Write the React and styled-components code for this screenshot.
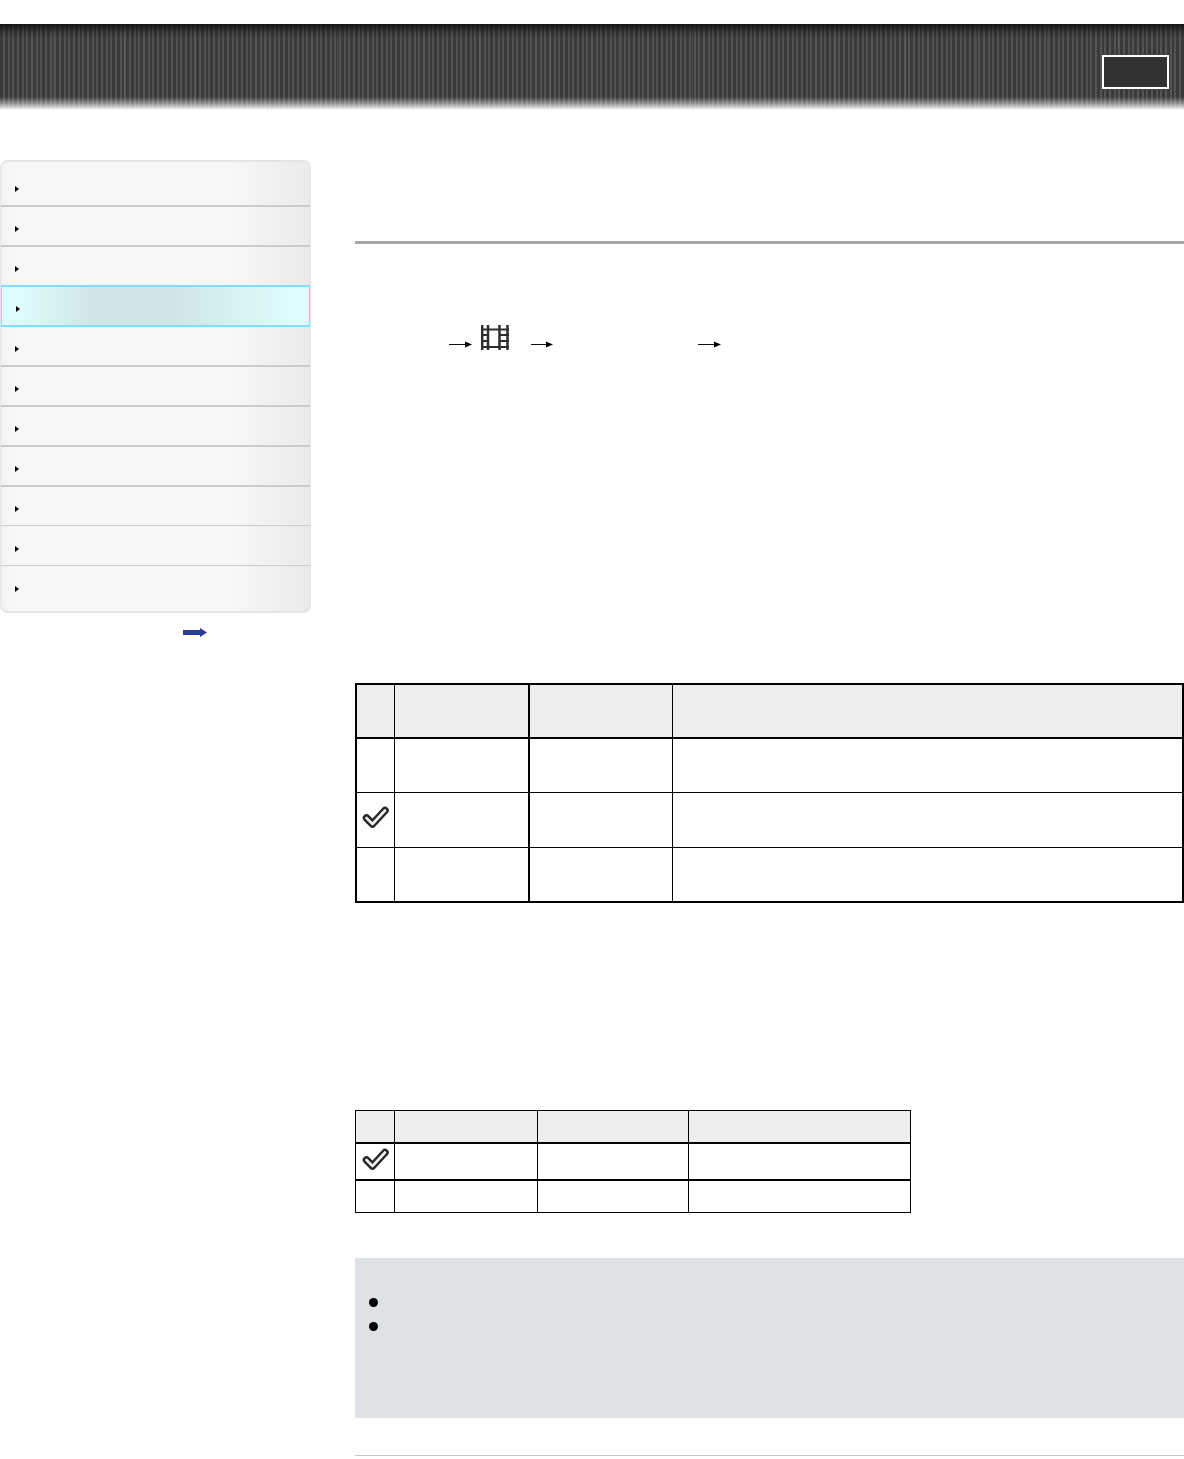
import React from 'react';
import styled, { createGlobalStyle } from 'styled-components';

const GlobalStyle = createGlobalStyle`
    html, body {
        margin: 0;
        padding: 0;
        background: #fff;
        font-family: "Liberation Sans", Arial, sans-serif;
    }
`

const Page = styled.div`
    width: 1184px;
    height: 1459px;
    overflow: hidden;
    padding-top: 24px;
    box-sizing: border-box;
`

const Banner = styled.header`
    height: 86px;
    box-sizing: border-box;
    padding: 31px 15px 0 0;
    display: flex;
    justify-content: flex-end;
    align-items: flex-start;
    background-color: #3d3d3d;
    background-image:
        linear-gradient(to bottom, rgba(12,12,12,.85) 0, rgba(20,20,20,.3) 8px, rgba(30,30,30,0) 14px, rgba(255,255,255,0) 73px, rgba(255,255,255,.4) 79px, rgba(255,255,255,.9) 85px, #fff 86px),
        repeating-linear-gradient(to right, rgba(255,255,255,0) 0, rgba(255,255,255,0) 53px, rgba(255,255,255,.08) 53px, rgba(255,255,255,.08) 54px, rgba(255,255,255,0) 54px, rgba(255,255,255,0) 71px),
        repeating-linear-gradient(to right, #3a3a3a 0, #3a3a3a 3px, #535353 3px, #535353 5px, #3a3a3a 5px, #3a3a3a 8px, #535353 8px, #535353 10px, #3a3a3a 10px, #3a3a3a 12px, #535353 12px, #535353 14px);
`

const BannerButton = styled.div`
    width: 67px;
    height: 34px;
    box-sizing: border-box;
    border: 2px solid #fff;
    background: #333;
`

const Columns = styled.div`
    display: flex;
    gap: 44px;
    padding-top: 50px;
`

const SideColumn = styled.div`
    width: 311px;
    flex: none;
`

const Nav = styled.nav`
    height: 453px;
    box-sizing: border-box;
    display: flex;
    flex-direction: column;
    border: 1px solid #e4e4e6;
    border-width: 2px 1px 2px 1px;
    border-radius: 8px;
    overflow: hidden;
    background: linear-gradient(to right, #f0f0f0 0, #f7f7f7 8px, #f7f7f7 75%, #eaeaea 100%);
`

const NavRow = styled.div`
    flex: none;
    height: ${props => props.$height}px;
    box-sizing: border-box;
    padding: ${props => props.$top}px 0 0 14px;
    margin: 0 -1px;
    border-bottom: ${props => props.$line}px solid #ccc;
    ${props => props.$active && `
        border: 2px solid #7fdfff;
        padding-left: 13px;
        background: linear-gradient(to right, #e0fcfe 0, #e0fcfe 5%, #cfe4e6 30%, #cfe4e6 55%, #e0fcfe 95%);
    `}
`

const Triangle = styled.span`
    display: block;
    width: 0;
    height: 0;
    border-left: 4.5px solid #000;
    border-top: 3.5px solid transparent;
    border-bottom: 3.5px solid transparent;
    margin-left: 1px;
`

const MoreLink = styled.div`
    display: flex;
    padding: 15px 0 0 183px;
`

const Main = styled.main`
    width: 829px;
    flex: none;
    padding-top: 81px;
`

const Rule = styled.div`
    height: 3px;
    background: #a6a6a6;
`

const MenuPath = styled.div`
    display: flex;
    align-items: flex-start;
    height: 25px;
    margin-top: 81px;
    padding-left: 94px;
`

const PathArrow = styled.svg`
    display: block;
    flex: none;
    margin: 15px 0 0 ${props => props.$left}px;
`

const FilmIcon = styled.svg`
    display: block;
    flex: none;
    margin-left: ${props => props.$left}px;
`

const Table = styled.table`
    display: table;
    table-layout: fixed;
    border-collapse: separate;
    border-spacing: 0;
    width: ${props => props.$width}px;
    border: ${props => props.$border}px solid #000;
    margin-top: ${props => props.$top}px;
`

const Cell = styled.td`
    padding: 0;
    height: ${props => props.$height}px;
    box-sizing: border-box;
    vertical-align: top;
    background: ${props => props.$head ? '#eee' : '#fff'};
    border-right: ${props => props.$right || 0}px solid #000;
    border-bottom: ${props => props.$bottom || 0}px solid #000;
`

const Check = styled.svg`
    display: block;
    margin: ${props => props.$top}px auto 0;
`

const Note = styled.section`
    height: 160px;
    box-sizing: border-box;
    margin-top: 45px;
    padding: 40px 0 0 14px;
    background: #dee1e5;
    display: flex;
    flex-direction: column;
    gap: 15px;
`

const Bullet = styled.span`
    display: block;
    width: 9px;
    height: 9px;
    border-radius: 50%;
    background: #000;
`

const BottomLine = styled.div`
    height: 1px;
    margin-top: 37px;
    background: #c8c8c8;
`

const ThinArrow = ({ left, width }) => (
    <PathArrow $left={left} width={width} height={9} viewBox={`0 0 ${width} 9`}>
        <path d={`M0 4.5H${width - 4}`} stroke="#111" strokeWidth="1" fill="none" />
        <path d={`M${width - 7} 1.5L${width} 4.5L${width - 7} 7.5Z`} fill="#000" />
    </PathArrow>
)

const CheckMark = ({ top }) => (
    <Check $top={top} width={27} height={23} viewBox="0 0 27 23">
        <path d="M4.5 12L10.5 18L23 4.5" fill="none" stroke="#262626" strokeWidth="7.5" strokeLinejoin="round" strokeLinecap="round" />
        <path d="M4.5 12L10.5 18L23 4.5" fill="none" stroke="#efefef" strokeWidth="2.6" strokeLinejoin="round" strokeLinecap="round" />
    </Check>
)

// nav rows as measured: height, triangle offset, divider weight
const navRows = [
    { height: 45, top: 24, line: 2 },
    { height: 40, top: 19, line: 2 },
    { height: 38, top: 19, line: 0 },
    { height: 42, top: 19, line: 0, active: true },
    { height: 40, top: 19, line: 2 },
    { height: 40, top: 19, line: 2 },
    { height: 40, top: 19, line: 2 },
    { height: 40, top: 19, line: 2 },
    { height: 39, top: 19, line: 1 },
    { height: 40, top: 20, line: 1 },
    { height: 46, top: 20, line: 0 },
]

const firstColumns = [38, 135, 143, 509]
const firstRights = [1, 2, 1, 0]
const firstRows = [
    { height: 54, bottom: 2, head: true },
    { height: 54, bottom: 1 },
    { height: 55, bottom: 1, check: 13 },
    { height: 53, bottom: 0 },
]

const secondColumns = [39, 143, 151, 221]
const secondRights = [1, 1, 1, 0]
const secondRows = [
    { height: 33, bottom: 2, head: true },
    { height: 37, bottom: 2, check: 4 },
    { height: 31, bottom: 0 },
]

const SpecTable = ({ columns, rights, rows, width, border, top }) => (
    <Table $width={width} $border={border} $top={top}>
        <colgroup>
            {columns.map((w, i) => <col key={i} style={{ width: w }} />)}
        </colgroup>
        <tbody>
            {rows.map((row, r) => (
                <tr key={r}>
                    {columns.map((w, c) => (
                        <Cell key={c} $height={row.height} $head={row.head} $right={rights[c]} $bottom={row.bottom}>
                            {c === 0 && row.check ? <CheckMark top={row.check} /> : null}
                        </Cell>
                    ))}
                </tr>
            ))}
        </tbody>
    </Table>
)

export default function App() {
    return (
        <Page>
            <GlobalStyle />
            <Banner>
                <BannerButton />
            </Banner>
            <Columns>
                <SideColumn>
                    <Nav>
                        {navRows.map((row, i) => (
                            <NavRow key={i} $height={row.height} $top={row.top} $line={row.line} $active={row.active}>
                                <Triangle />
                            </NavRow>
                        ))}
                    </Nav>
                    <MoreLink>
                        <svg width="24" height="9" viewBox="0 0 24 9">
                            <path d="M0 2H17V0L24 4.5L17 9V7H0Z" fill="#2b3a9a" />
                        </svg>
                    </MoreLink>
                </SideColumn>
                <Main>
                    <Rule />
                    <MenuPath>
                        <ThinArrow left={0} width={23} />
                        <FilmIcon $left={9} width={28} height={25} viewBox="0 0 28 25">
                            <path d="M1.2 0V25M7 0V25M18.5 0V25M26.5 0V25" stroke="#2e2e2e" strokeWidth="2.5" fill="none" />
                            <path d="M0 4.5H28M0 10H7M18.5 10H28M0 16H7M18.5 16H28M0 22H28" stroke="#2e2e2e" strokeWidth="2" fill="none" />
                        </FilmIcon>
                        <ThinArrow left={22} width={22} />
                        <ThinArrow left={145} width={23} />
                    </MenuPath>
                    <SpecTable columns={firstColumns} rights={firstRights} rows={firstRows} width={829} border={2} top={333} />
                    <SpecTable columns={secondColumns} rights={secondRights} rows={secondRows} width={556} border={1} top={207} />
                    <Note>
                        <Bullet />
                        <Bullet />
                    </Note>
                    <BottomLine />
                </Main>
            </Columns>
        </Page>
    )
}
